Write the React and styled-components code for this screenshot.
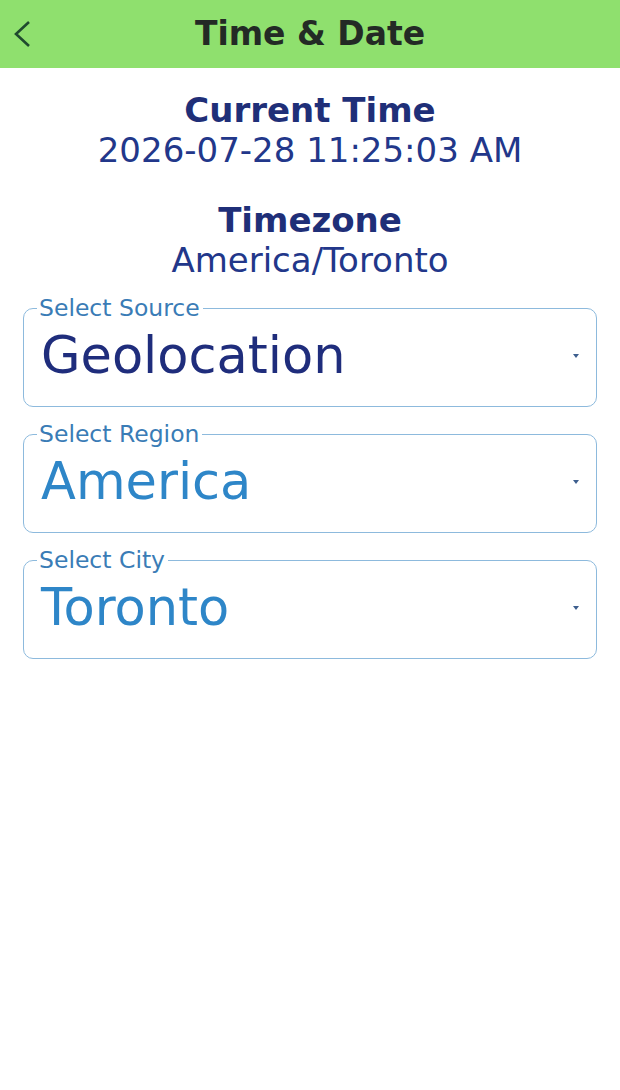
import styled, { createGlobalStyle } from "styled-components";

const GlobalStyle = createGlobalStyle`
  html, body {
    margin: 0;
    padding: 0;
    background: #ffffff;
  }
  body {
    font-family: "DejaVu Sans", "Liberation Sans", sans-serif;
  }
`;

const fields = [
  { label: "Select Source", value: "Geolocation", tone: "dark" },
  { label: "Select Region", value: "America", tone: "light" },
  { label: "Select City", value: "Toronto", tone: "light" },
];

export default function App() {
  return (
    <>
      <GlobalStyle />
      <Screen>
        <Header>
          <BackButton aria-label="back">
            <svg width="20" height="28" viewBox="0 0 20 28">
              <polyline
                points="17,2 4,14 17,26"
                fill="none"
                stroke="#1f4a2e"
                strokeWidth="2.6"
              />
            </svg>
          </BackButton>
          <Title>Time &amp; Date</Title>
        </Header>

        <Content>
          <InfoBlock>
            <InfoTitle>Current Time</InfoTitle>
            <InfoValue>2026-07-28 11:25:03 AM</InfoValue>
          </InfoBlock>
          <InfoBlock>
            <InfoTitle>Timezone</InfoTitle>
            <InfoValue>America/Toronto</InfoValue>
          </InfoBlock>

          <Fields>
            {fields.map((f) => (
              <Field key={f.label}>
                <Legend>{f.label}</Legend>
                <SelectRow>
                  <Value tone={f.tone}>{f.value}</Value>
                  <Caret />
                </SelectRow>
              </Field>
            ))}
          </Fields>
        </Content>
      </Screen>
    </>
  );
}

const Screen = styled.div`
  width: 620px;
  min-height: 1090px;
  background: #ffffff;
`;

const Header = styled.header`
  position: relative;
  height: 68px;
  background: #8fe06e;
  display: flex;
  align-items: center;
  justify-content: center;
`;

const BackButton = styled.button`
  position: absolute;
  left: 12px;
  top: 20px;
  border: none;
  background: none;
  padding: 0;
  display: flex;
`;

const Title = styled.h1`
  margin: 0 0 2px 0;
  font-family: "DejaVu Sans", sans-serif;
  font-size: 33px;
  font-weight: 700;
  color: #232a25;
`;

const Content = styled.main`
  padding: 22px 23px 0 23px;
  display: flex;
  flex-direction: column;
`;

const InfoBlock = styled.section`
  display: flex;
  flex-direction: column;
  align-items: center;
  margin-bottom: 30px;
  &:nth-of-type(2) {
    margin-bottom: 17px;
  }
`;

const InfoTitle = styled.h2`
  margin: 0;
  font-size: 34px;
  line-height: 40px;
  font-weight: 700;
  color: #1f2f78;
`;

const InfoValue = styled.div`
  font-size: 34px;
  line-height: 40px;
  color: #22378a;
`;

const Fields = styled.div`
  display: flex;
  flex-direction: column;
  gap: 16px;
`;

const Field = styled.fieldset`
  margin: 0;
  padding: 0 17px 0 17px;
  min-width: 0;
  border: 1.5px solid #8dbadd;
  border-radius: 10px;
`;

const Legend = styled.legend`
  margin-left: -4px;
  padding: 0 3px 0 2px;
  font-size: 23.5px;
  line-height: 22px;
  color: #3a7cb6;
`;

const SelectRow = styled.div`
  display: flex;
  align-items: center;
  justify-content: space-between;
  height: 74px;
  padding-bottom: 13px;
`;

const Value = styled.div`
  font-size: 51px;
  line-height: 74px;
  color: ${(p) => (p.tone === "dark" ? "#1f2d7c" : "#2e86c8")};
`;

const Caret = styled.span`
  width: 0;
  height: 0;
  margin-right: 0;
  border-left: 3.5px solid transparent;
  border-right: 3.5px solid transparent;
  border-top: 4px solid #3d5e8e;
`;
